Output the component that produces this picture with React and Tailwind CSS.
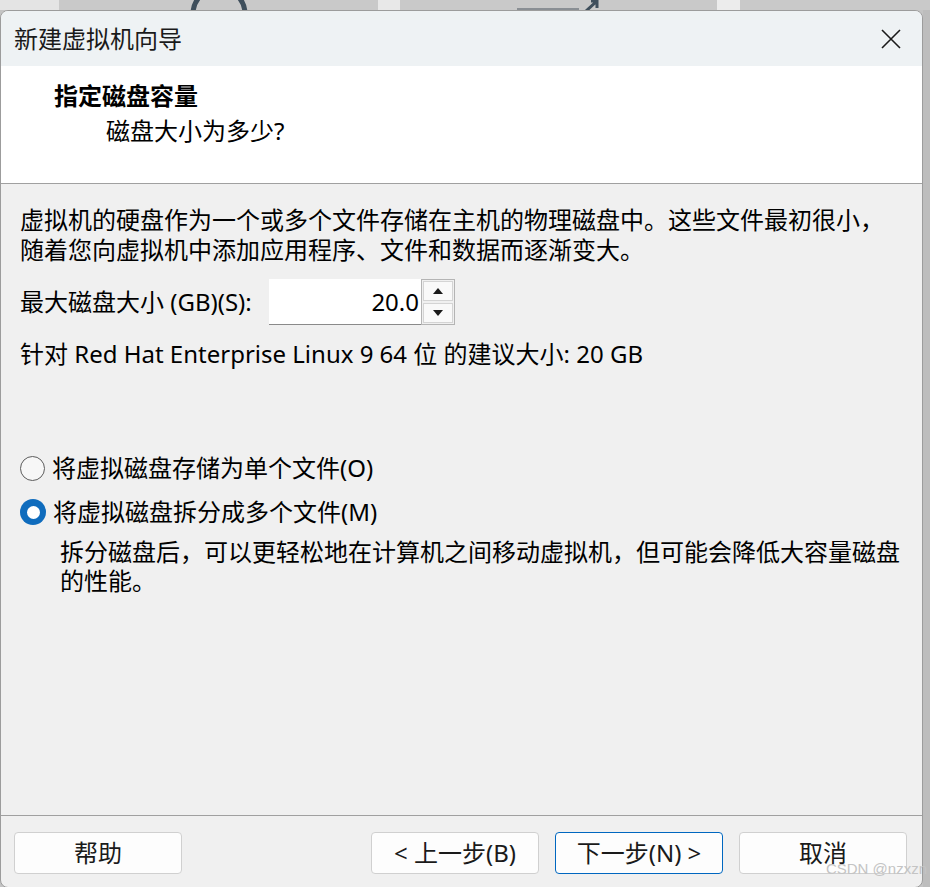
import React from "react";

function Radio({ checked }) {
  if (checked) {
    return (
      <span className="flex h-[26px] w-[26px] shrink-0 items-center justify-center rounded-full bg-[#0f6cbd]">
        <span className="h-[13px] w-[13px] rounded-full bg-white" />
      </span>
    );
  }
  return <span className="h-[25px] w-[25px] shrink-0 rounded-full border-[1.5px] border-[#5c5c5c] bg-[#f7f7f7]" />;
}

function Button({ children, primary }) {
  return (
    <button
      className={
        primary
          ? "flex h-[42px] w-[168px] items-center justify-center rounded-[4px] border border-[#0067c0] bg-[#fdfdfd] text-[24px] text-[#1a1a1a]"
          : "flex h-[42px] w-[168px] items-center justify-center rounded-[4px] border border-[#d0d0d0] bg-[#fdfdfd] text-[24px] text-[#1a1a1a]"
      }
    >
      {children}
    </button>
  );
}

export default function App() {
  return (
    <div className="relative flex h-[887px] w-[930px] flex-col overflow-hidden bg-[#c4c4c4] font-['Noto_Sans','Noto_Sans_CJK_SC',sans-serif]">
      {/* desktop behind the dialog */}
      <div className="flex h-[10px] shrink-0">
        <div className="w-[59px] bg-[#e4e4e4]" />
        <div className="relative w-[319px] bg-[#c9c9c9]">
          <svg className="absolute left-[130px] top-0" width="60" height="10" viewBox="0 0 60 10">
            <path d="M4 14 A26 26 0 0 1 56 14" fill="none" stroke="#3f4f5c" strokeWidth="5" />
          </svg>
        </div>
        <div className="w-[22px] bg-[#e8e8e8]" />
        <div className="relative w-[317px] bg-[#c9c9c9]">
          <div className="absolute left-[117px] top-[8px] h-[2px] w-[62px] bg-[#8a8f94]" />
          <svg className="absolute left-[183px] top-0" width="20" height="10" viewBox="0 0 20 10">
            <path d="M2 12 L14 1 M8 1 L14 1 L14 8" fill="none" stroke="#3f4f5c" strokeWidth="3" />
          </svg>
        </div>
        <div className="w-[23px] bg-[#ececec]" />
        <div className="flex-1 bg-[#c9c9c9]" />
      </div>

      <div className="flex min-h-0 flex-1">
        {/* dialog */}
        <div className="flex h-[878px] w-[923px] shrink-0 flex-col overflow-hidden rounded-[8px] border border-[#9c9c9c] bg-[#f0f0f0]">
          {/* title bar */}
          <div className="flex h-[55px] shrink-0 items-center justify-between bg-[#eef2f4] pl-[13px] pr-[21px]">
            <span className="text-[24px] leading-none text-[#1a1a1a]">新建虚拟机向导</span>
            <svg width="20" height="20" viewBox="0 0 20 20">
              <path d="M1 1 L19 19 M19 1 L1 19" stroke="#1a1a1a" strokeWidth="1.6" />
            </svg>
          </div>

          {/* header */}
          <div className="h-[118px] shrink-0 border-b border-[#a0a0a0] bg-white pt-[15px]">
            <div className="pl-[53px] text-[24px] font-bold leading-[30px] text-black">指定磁盘容量</div>
            <div className="mt-[5px] pl-[105px] text-[24px] leading-[30px] text-black">磁盘大小为多少?</div>
          </div>

          {/* body */}
          <div className="flex min-h-0 flex-1 flex-col px-[19px] pt-[21px] text-[24px] text-black">
            <p className="leading-[30px]">
              虚拟机的硬盘作为一个或多个文件存储在主机的物理磁盘中。这些文件最初很小，
              <br />
              随着您向虚拟机中添加应用程序、文件和数据而逐渐变大。
            </p>

            <div className="mt-[14px] flex items-center">
              <span className="w-[249px] text-[24px] leading-[30px]">最大磁盘大小 (GB)(S):</span>
              <div className="flex h-[46px] w-[152px] items-center justify-end border-b border-[#8a8a8a] bg-white pr-[2px] text-[24px]">
                20.0
              </div>
              <div className="flex h-[46px] w-[34px] flex-col gap-[2px] border border-[#b4b4b4] bg-[#f0f0f0] p-[1px]">
                <div className="flex flex-1 items-center justify-center border border-[#d4d4d4] bg-[#f9f9f9]">
                  <svg width="10" height="6" viewBox="0 0 10 6">
                    <path d="M5 0 L10 6 L0 6 Z" fill="#1a1a1a" />
                  </svg>
                </div>
                <div className="flex flex-1 items-center justify-center border border-[#d4d4d4] bg-[#f9f9f9]">
                  <svg width="10" height="6" viewBox="0 0 10 6">
                    <path d="M0 0 L10 0 L5 6 Z" fill="#1a1a1a" />
                  </svg>
                </div>
              </div>
            </div>

            <p className="mt-[14px] text-[24px] leading-[30px]">针对 Red Hat Enterprise Linux 9 64 位 的建议大小: 20 GB</p>

            <div className="mt-[84px] flex items-center gap-[7px]">
              <Radio />
              <span className="leading-[30px]">将虚拟磁盘存储为单个文件(O)</span>
            </div>
            <div className="mt-[14px] flex items-center gap-[7px]">
              <Radio checked />
              <span className="leading-[30px]">将虚拟磁盘拆分成多个文件(M)</span>
            </div>
            <div className="mt-[10px] flex flex-col pl-[40px]">
              <span className="leading-[29px]">拆分磁盘后，可以更轻松地在计算机之间移动虚拟机，但可能会降低大容量磁盘</span>
              <span className="leading-[29px]">的性能。</span>
            </div>
          </div>

          {/* footer */}
          <div className="flex h-[72px] shrink-0 items-start border-t border-[#a0a0a0] pl-[13px] pr-[15px] pt-[16px]">
            <Button>帮助</Button>
            <div className="ml-auto flex gap-[16px]">
              <Button>&lt; 上一步(B)</Button>
              <Button primary>下一步(N) &gt;</Button>
              <Button>取消</Button>
            </div>
          </div>
        </div>
        <div className="flex-1 bg-[#bdbdbd]" />
      </div>

      <span className="absolute bottom-[7px] right-[3px] font-['Liberation_Sans',sans-serif] text-[15px] text-[#c4c4c4]">
        CSDN @nzxzn
      </span>
    </div>
  );
}
